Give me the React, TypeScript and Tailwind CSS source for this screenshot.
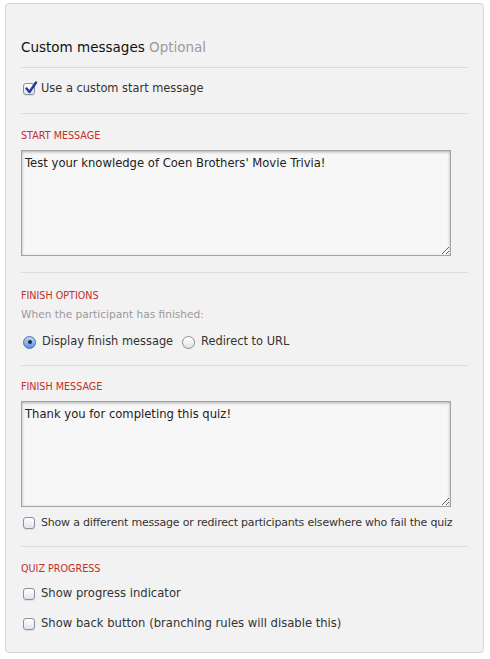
import { ReactNode } from 'react';

const font = { fontFamily: '"DejaVu Sans", "Liberation Sans", sans-serif' };

function Box({ checked }: { checked?: boolean }) {
  return (
    <span className="relative inline-flex w-[12px] h-[12px] shrink-0 rounded-[3px] border border-[#8a8fa0] bg-gradient-to-b from-[#ffffff] to-[#dfe4ee] shadow-[0_1px_1px_rgba(0,0,0,0.08)]">
      {checked && (
        <svg
          viewBox="0 0 14 14"
          className="absolute left-[0px] top-[-3px] w-[14px] h-[14px]"
        >
          <path
            d="M2.5 7.5 L5.5 11 L12 1.5"
            fill="none"
            stroke="#1f3f8f"
            strokeWidth="2.4"
            strokeLinecap="round"
            strokeLinejoin="round"
          />
        </svg>
      )}
    </span>
  );
}

function Radio({ checked }: { checked?: boolean }) {
  return checked ? (
    <span className="inline-flex items-center justify-center w-[13px] h-[13px] shrink-0 rounded-full border border-[#4a6fb0] bg-gradient-to-b from-[#bcd6f5] to-[#5d93de]">
      <span className="w-[4px] h-[4px] rounded-full bg-[#1b2b45]" />
    </span>
  ) : (
    <span className="inline-flex w-[13px] h-[13px] shrink-0 rounded-full border border-[#8e8e8e] bg-gradient-to-b from-[#ffffff] to-[#e3e3e3]" />
  );
}

function Row({ children, className = '' }: { children: ReactNode; className?: string }) {
  return (
    <div className={`flex items-center h-[20px] pl-[2px] gap-[6px] text-[11.6px] text-[#333] whitespace-nowrap ${className}`}>
      {children}
    </div>
  );
}

function Label({ children }: { children: ReactNode }) {
  return (
    <div className="h-[14px] leading-[14px] text-[9.6px] text-[#c0302b] uppercase">
      {children}
    </div>
  );
}

function Area({ value, className = '' }: { value: string; className?: string }) {
  return (
    <textarea
      defaultValue={value}
      style={font}
      className={`block w-[430px] h-[106px] px-[3px] pt-[4px] text-[11.6px] leading-[16px] text-[#222] bg-[#f7f7f7] border border-[#a3a3a3] shadow-[inset_0_1px_3px_rgba(0,0,0,0.3)] outline-none ${className}`}
    />
  );
}

export default function App() {
  return (
    <div className="bg-white w-[490px] h-[659px] pl-[5px] pt-[3px]" style={font}>
      <div className="w-[479px] h-[650px] rounded-[4px] border border-[#d6d6d6] bg-[#f3f2f2] px-[15px] pt-[33px]">
        {/* Header */}
        <div className="h-[20px] leading-[20px] text-[13.5px] text-[#111] mb-[10px]">
          Custom messages <span className="text-[#9a9a9a]">Optional</span>
        </div>

        <div className="border-t border-[#dcdcdc] pt-[11px] pb-[14px]">
          <Row>
            <Box checked />
            <span className="text-[11.4px]">Use a custom start message</span>
          </Row>
        </div>

        {/* Start message */}
        <div className="border-t border-[#dcdcdc] pt-[15px] pb-[16px]">
          <Label>Start message</Label>
          <Area value="Test your knowledge of Coen Brothers' Movie Trivia!" className="mt-[7px]" />
        </div>

        {/* Finish options */}
        <div className="border-t border-[#dcdcdc] pt-[16px] pb-[13px]">
          <Label>Finish options</Label>
          <div className="mt-[3px] h-[16px] leading-[16px] text-[10.6px] text-[#999]">
            When the participant has finished:
          </div>
          <Row className="mt-[10px]">
            <Radio checked />
            <span className="w-[134px] text-[11.4px]">Display finish message</span>
            <Radio />
            <span className="text-[11.4px]">Redirect to URL</span>
          </Row>
        </div>

        {/* Finish message */}
        <div className="border-t border-[#dcdcdc] pt-[14px] pb-[13px]">
          <Label>Finish message</Label>
          <Area value="Thank you for completing this quiz!" className="mt-[7px]" />
          <Row className="mt-[6px]">
            <Box />
            <span className="text-[11px] tracking-[-0.2px]">
              Show a different message or redirect participants elsewhere who fail the quiz
            </span>
          </Row>
        </div>

        {/* Quiz progress */}
        <div className="border-t border-[#dcdcdc] pt-[15px]">
          <Label>Quiz progress</Label>
          <Row className="mt-[8px]">
            <Box />
            <span>Show progress indicator</span>
          </Row>
          <Row className="mt-[10px]">
            <Box />
            <span>Show back button (branching rules will disable this)</span>
          </Row>
        </div>
      </div>
    </div>
  );
}
